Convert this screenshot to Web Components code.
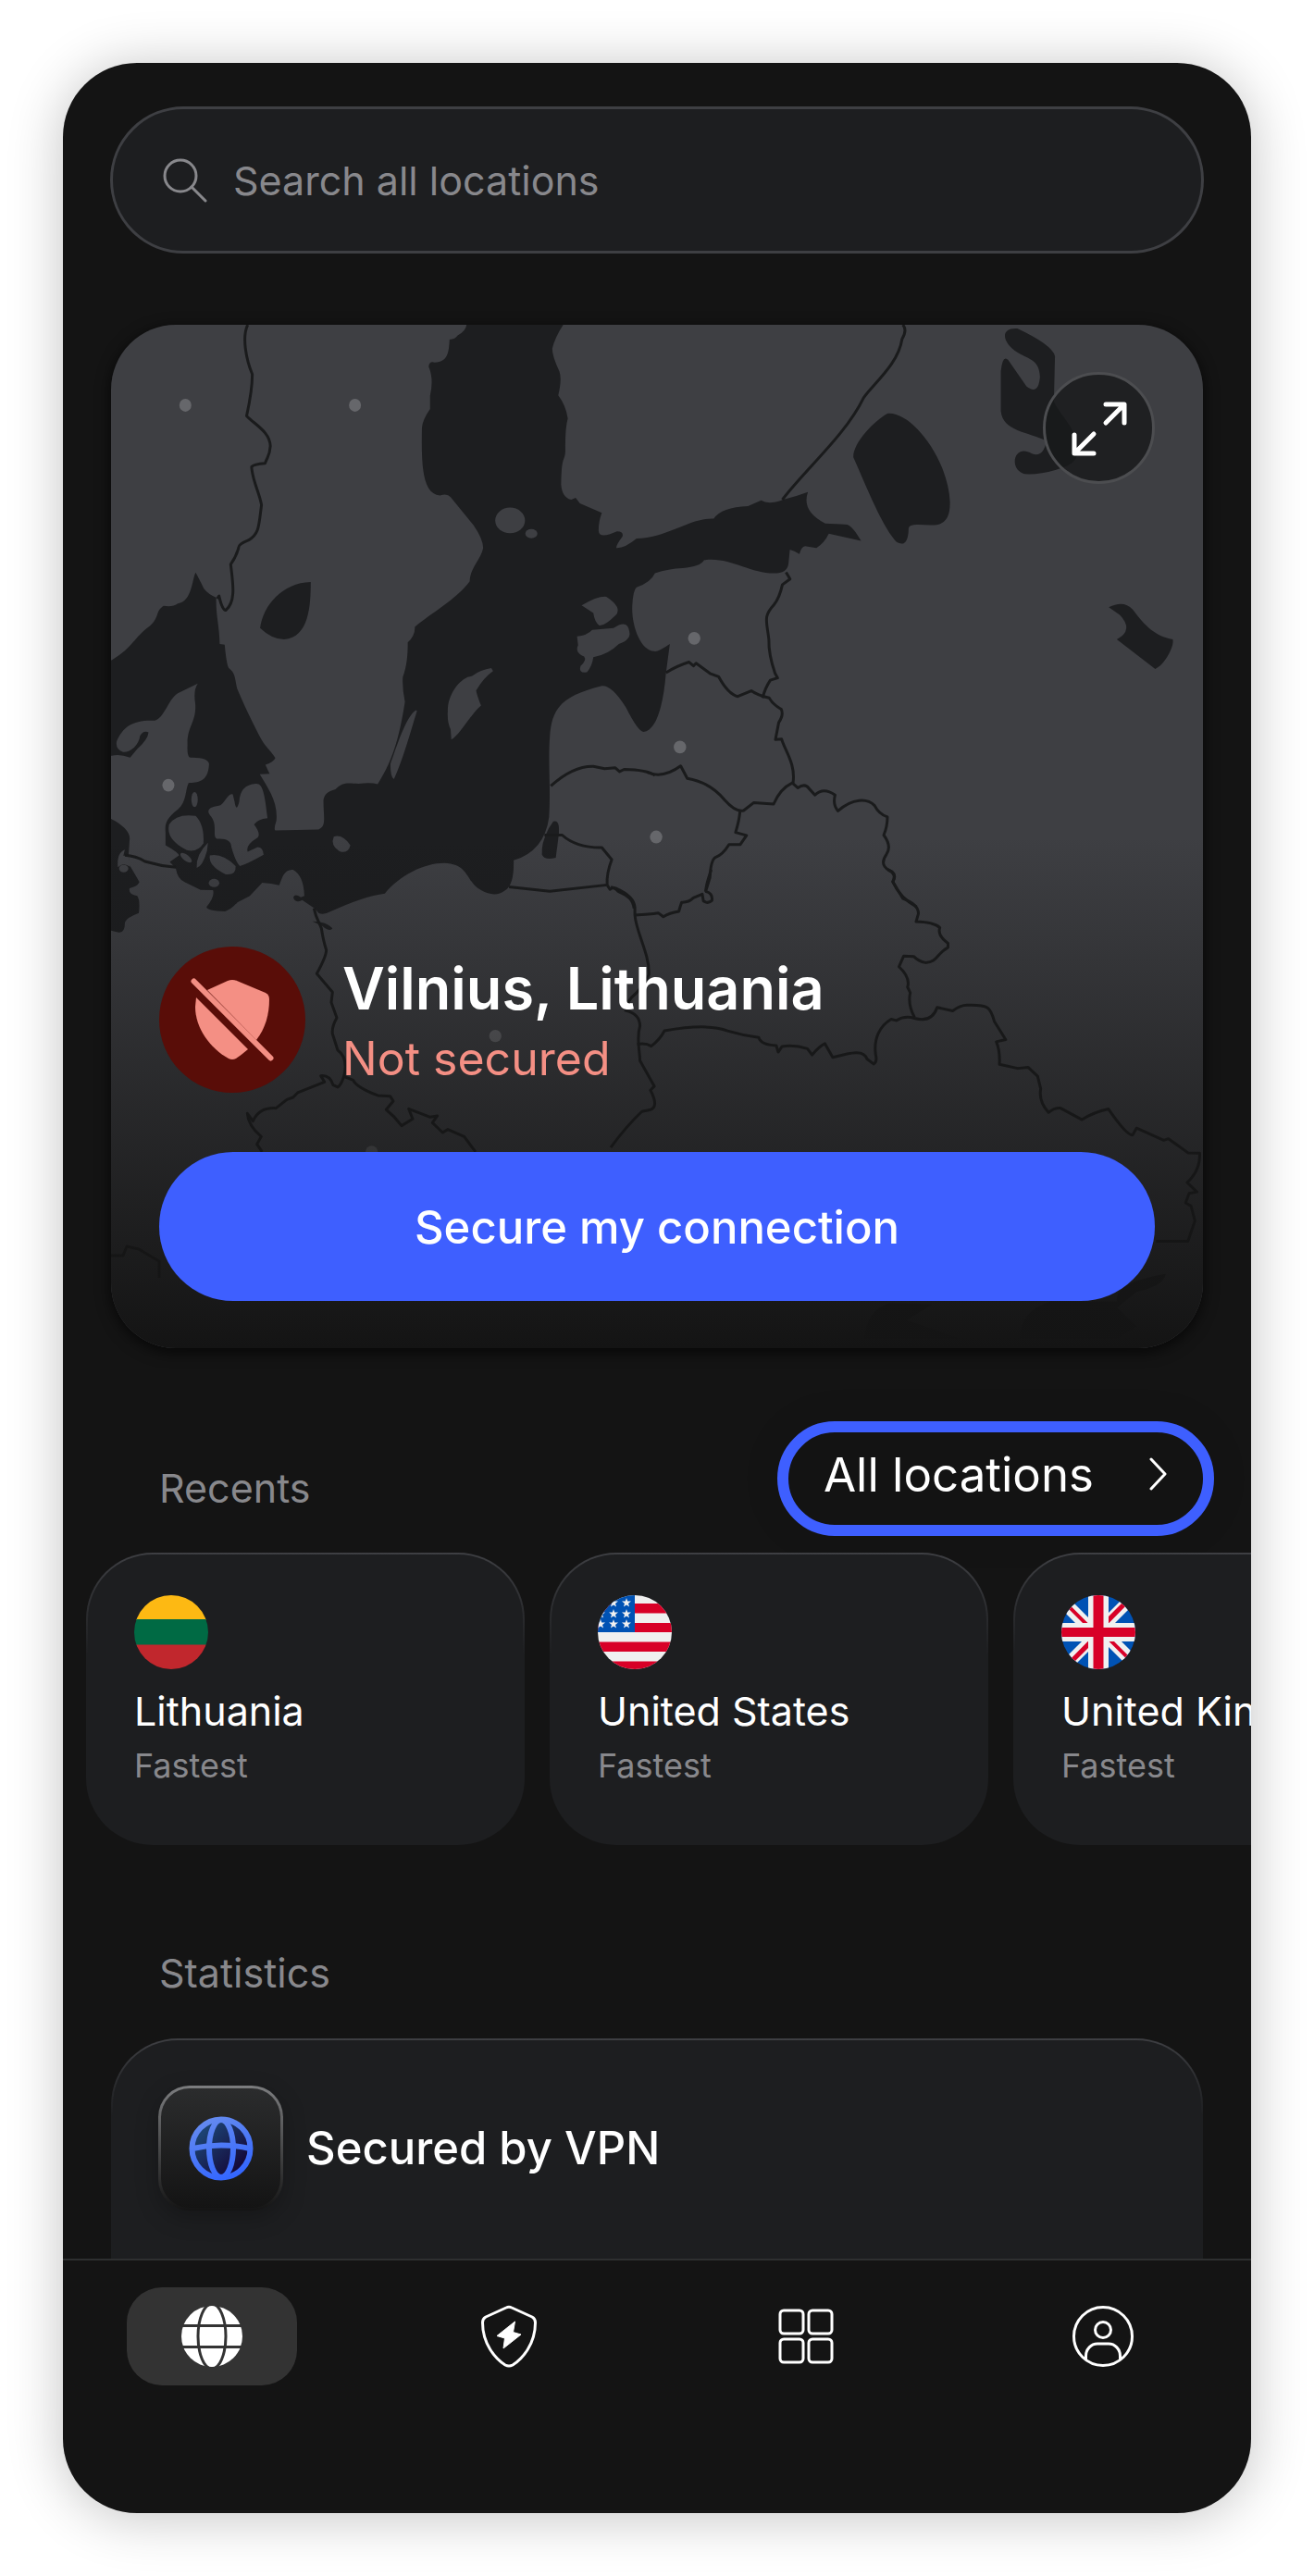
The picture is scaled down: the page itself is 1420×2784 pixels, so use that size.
<!DOCTYPE html>
<html lang="en">
<head>
<meta charset="utf-8">
<meta name="viewport" content="width=device-width, initial-scale=1">
<title>VPN</title>
<style>
    body {
        margin: 0;
        padding: 68px;
        background: #fff;
        font-family: Inter, "Liberation Sans", sans-serif;
        color: #fff;
    }
</style>
</head>
<body>
<app-shell>
    <search-bar></search-bar>
    <map-card place="Vilnius, Lithuania" status="Not secured">Secure my connection</map-card>
    <section-header>
        Recents
        <all-link slot="action">All locations</all-link>
    </section-header>
    <location-list>
        <location-card flag="lt" detail="Fastest">Lithuania</location-card>
        <location-card flag="us" detail="Fastest">United States</location-card>
        <location-card flag="gb" detail="Fastest">United Kingdom</location-card>
    </location-list>
    <section-header class="stats">Statistics</section-header>
    <stat-card>Secured by VPN</stat-card>
    <tab-bar slot="footer"></tab-bar>
</app-shell>

<script>
class AppShell extends HTMLElement {
    constructor() {
        super();
        this.attachShadow({ mode: 'open' });
        this.shadowRoot.innerHTML = `
            <style>
                :host {
                    display: block;
                    border-radius: 80px;
                    background: #141414;
                    box-shadow: 0 4px 60px rgba(0, 0, 0, 0.24);
                }
                .screen {
                    border-radius: inherit;
                    overflow: hidden;
                    padding-top: 47px;
                }
            </style>
            <div class="screen">
                <main><slot></slot></main>
                <slot name="footer"></slot>
            </div>
        `;
    }
}

class SearchBar extends HTMLElement {
    constructor() {
        super();
        this.attachShadow({ mode: 'open' });
        this.shadowRoot.innerHTML = `
            <style>
                :host { display: block; margin: 0 51px; }
                label {
                    display: flex;
                    align-items: center;
                    gap: 28px;
                    padding: 0 54px;
                    border: 3px solid #3e3f43;
                    border-radius: 80px;
                    background: #1d1e20;
                }
                svg { flex: none; width: 48px; height: 48px; }
                input {
                    flex: 1;
                    min-width: 0;
                    height: 153px;
                    padding: 0;
                    border: 0;
                    outline: 0;
                    background: none;
                    color: #fff;
                    font: 400 43px Inter, sans-serif;
                }
                input::placeholder { color: #88888c; opacity: 1; }
            </style>
            <label>
                <svg viewBox="0 0 48 48" fill="none" stroke="#88888c" stroke-width="3" stroke-linecap="round">
                    <circle cx="19" cy="19" r="17"/><path d="M31 31l15 15"/>
                </svg>
                <input type="search" placeholder="Search all locations" aria-label="Search all locations">
            </label>
        `;
    }
}

// The map is drawn in four overlapping tiles, each with its own grid.
const MAP = `
    <svg class="map" viewBox="0 0 1180 1106" preserveAspectRatio="xMidYMid slice" aria-hidden="true">
        <defs>
            <linearGradient id="fade" x1="0" y1="0" x2="0" y2="1">
                <stop offset=".5" stop-color="#141414" stop-opacity="0"/>
                <stop offset="1" stop-color="#141414"/>
            </linearGradient>
        </defs>
        <rect width="1180" height="1106" fill="#3e3f43"/>

        <g transform="translate(-10 -11) scale(.3827 .4082)">
            <path class="sea" d="M1030 27Q1028 44 1005 55Q998 65 982 66C980 95 980 125 940 127Q925 122 923 138Q938 170 927 215V250Q905 280 904 300C902 400 905 475 955 479Q975 472 985 483L1050 558Q1077 595 1077 618C1070 650 1040 670 1039 706C1000 755 930 790 884 827Q885 850 864 868C864 900 862 930 850 960Q848 990 856 1025C845 1090 830 1170 779 1243Q760 1238 725 1242C690 1240 680 1238 660 1257Q625 1265 626 1290C626 1330 635 1355 612 1363L490 1366Q485 1362 493 1340C498 1290 470 1255 446 1217L474 1216Q468 1205 462 1192Q485 1185 490 1174C475 1150 465 1150 445 1115C420 1070 395 1020 382 990C375 960 378 950 358 935Q352 925 347 874L333 872C332 820 322 800 323 749Q300 740 288 725Q275 700 265 683C255 700 255 760 215 765Q200 775 175 771C150 785 165 800 135 825C90 855 90 880 28 915H0V1168L28 1168Q50 1162 80 1173L100 1150Q130 1125 132 1106Q118 1100 108 1115C105 1140 80 1160 60 1158Q38 1152 42 1130C60 1090 90 1072 150 1075C180 1065 190 1010 220 1000L271 977Q258 995 264 1030C268 1080 240 1090 242 1140Q240 1175 252 1173Q300 1172 303 1190C300 1240 270 1238 245 1240C235 1260 240 1290 215 1310C180 1335 178 1350 180 1372V1405Q218 1425 218 1432L192 1449L209 1466Q214 1495 235 1503L279 1523L314 1524Q320 1540 296 1568Q295 1578 348 1580Q365 1575 383 1556L418 1539L453 1504Q480 1505 501 1511C510 1490 515 1468 540 1470Q570 1485 572 1539L562 1543Q545 1532 541 1543Q545 1560 566 1550L601 1572L613 1585Q627 1590 645 1581Q740 1540 799 1533C840 1485 910 1452 967 1452C1040 1455 1025 1500 1071 1524Q1110 1545 1138 1525Q1165 1510 1163 1445Q1250 1420 1263 1330C1268 1260 1260 1180 1265 1120C1270 1040 1300 1010 1412 983Q1440 980 1480 1040Q1515 1105 1530 1105C1565 1100 1585 1040 1593 950L1604 872Q1568 895 1560 891C1520 890 1495 820 1498 770Q1500 730 1510 722Q1550 710 1562 685Q1600 672 1640 671Q1690 668 1701 650C1770 640 1830 685 1898 685Q1935 685 1939 660L1943 622Q1955 625 1970 634Q1975 615 1986 613L2018 618Q2040 605 2053 580L2144 599Q2120 560 2105 556C2080 553 2060 555 2043 553Q1975 520 1994 470Q1960 482 1924 490Q1883 505 1862 492L1825 507Q1750 510 1728 540C1660 538 1600 590 1510 593Q1475 620 1453 618Q1452 610 1470 588Q1475 575 1455 574Q1405 595 1403 573Q1402 550 1412 525L1350 500L1338 485L1326 490Q1300 485 1297 450C1298 370 1308 390 1309 360Q1308 300 1316 275Q1310 240 1289 214Q1300 170 1292 150Q1272 110 1272 90Q1280 60 1303 27V0H1030Z"/>
            <g class="land">
                <path d="M1100 936Q1070 940 1045 957C1010 960 975 1010 977 1050Q975 1080 985 1098L987 1125C1010 1115 1040 1060 1071 1035Q1060 1010 1057 995Q1080 960 1105 944Z"/>
                <path d="M888 1047C860 1060 830 1150 815 1190Q815 1225 825 1230C850 1180 870 1110 890 1050Z"/>
                <path d="M655 1382Q680 1375 702 1405Q695 1430 670 1420Q645 1405 655 1382Z"/>
                <ellipse cx="1153" cy="545" rx="42" ry="34"/>
                <ellipse cx="1213" cy="580" rx="17" ry="12"/>
                <path d="M1355 770Q1400 745 1425 747Q1470 775 1452 795Q1420 825 1405 823Q1392 815 1388 790Z"/>
                <path d="M1342 852Q1370 850 1385 835L1445 830Q1485 805 1490 840Q1495 860 1460 872Q1430 900 1388 907Q1385 930 1370 947Q1345 950 1352 930Q1370 915 1362 905Q1335 895 1345 875Z"/>
                <path d="M370 1270C355 1265 345 1300 330 1300Q290 1305 305 1325C330 1350 310 1380 325 1388Q365 1385 366 1410Q378 1450 390 1460Q410 1455 457 1430Q455 1410 440 1410L412 1422Q405 1405 440 1385Q450 1375 430 1350Q440 1335 468 1333C460 1270 455 1240 435 1242Q390 1245 388 1290Q380 1320 375 1290Z"/>
                <path d="M190 1350Q210 1320 265 1327Q290 1350 287 1400Q270 1425 240 1418Q180 1390 190 1350Z"/>
                <path d="M300 1398Q265 1430 268 1465Q285 1460 297 1420Z"/>
                <path d="M305 1432Q340 1425 378 1460Q380 1485 350 1482Q300 1460 305 1432Z"/>
                <ellipse cx="238" cy="1438" rx="19" ry="8" transform="rotate(35 238 1438)"/>
                <ellipse cx="262" cy="1284" rx="9" ry="20"/>
                <ellipse cx="317" cy="1505" rx="15" ry="11"/>
            </g>
            <path class="sea" d="M590 708C510 710 455 770 447 830Q480 860 515 860C585 855 590 770 590 708Z"/>
            <path class="sea" d="M1275 1342Q1295 1335 1290 1380L1282 1438Q1250 1445 1243 1430Q1240 1400 1262 1360Z"/>
            <path class="border" d="M412 27C395 60 408 120 425 158Q425 200 409 268C430 290 475 310 476 348C474 375 468 375 461 394Q430 396 423 403C425 440 445 470 451 504C443 560 445 580 415 597Q385 608 386 618Q380 640 364 661C370 710 380 760 350 783Q340 782 331 745L326 752"/>
            <path class="border" d="M1268 1248Q1330 1195 1388 1196L1420 1202L1450 1200L1462 1210L1475 1204Q1540 1205 1562 1220M1250 1378H1300Q1340 1412 1412 1411L1440 1443Q1425 1480 1427 1510L1265 1527L1150 1515M1427 1510L1435 1522Q1445 1512 1458 1527C1490 1540 1500 1550 1503 1572"/>
            <g class="dot"><circle cx="236" cy="240" r="17"/><circle cx="715" cy="240" r="17"/><circle cx="188" cy="1246" r="17"/></g>
        </g>

        <g transform="translate(580 -11) scale(.3954 .4082)">
            <g class="sea">
                <path d="M655 262C620 280 560 340 562 378C600 460 640 560 680 602Q712 620 713 565Q715 555 740 556C780 557 828 570 826 495C820 380 720 255 655 262Z"/>
                <path d="M1010 37C960 35 970 75 1010 100C1045 120 1070 120 1072 165Q1068 215 1035 190L985 120Q970 105 965 150V255C970 310 1040 310 1090 335Q1080 380 1050 368C1000 340 985 410 1030 422Q1080 425 1140 403Q1180 390 1175 350C1170 300 1130 270 1110 230L1113 110Q1105 80 1010 37Z"/>
                <path d="M1260 775Q1300 755 1325 780C1360 825 1385 850 1435 860C1440 880 1410 930 1387 938L1282 860Q1330 835 1290 795Z"/>
            </g>
            <g class="border">
                <path d="M697 27Q710 40 695 65C685 130 620 180 590 220C540 320 430 410 368 490"/>
                <path d="M378 682L389 700L368 715Q360 750 345 768C315 800 325 810 331 860Q330 900 348 950L355 962L335 968Q320 990 314 1015"/>
                <path d="M50 948Q80 930 113 920L125 930L132 923L170 950L194 959Q220 1005 246 1011L283 996Q300 1008 332 1015Q340 1030 365 1045Q372 1060 358 1080L349 1125L366 1124C375 1155 405 1190 397 1240"/>
                <path d="M0 1212Q40 1230 90 1195L108 1228C150 1235 185 1255 210 1285Q240 1318 262 1313L290 1292L344 1296Q362 1255 395 1240L410 1253Q430 1240 440 1254L457 1272Q480 1250 512 1272Q505 1298 520 1314C560 1280 600 1280 620 1300Q632 1323 655 1330Q655 1355 645 1378Q668 1408 652 1430Q630 1460 668 1475Q680 1485 670 1502Q690 1545 735 1568"/>
                <path d="M158 1528L170 1490Q172 1445 185 1437Q205 1430 222 1403L253 1403L270 1379L240 1371Q250 1340 252 1316"/>
            </g>
            <g class="dot"><circle cx="127" cy="857" r="17"/><circle cx="88" cy="1145" r="17"/><circle cx="23" cy="1383" r="17"/></g>
        </g>

        <g transform="translate(-10 529) scale(.3333)">
            <path class="sea" d="M0 8L30 15C70 35 95 60 90 85L87 130L90 165Q105 190 122 220Q115 235 90 240Q85 260 115 265Q125 280 120 320Q80 335 75 350Q75 385 55 383L0 370Z"/>
            <path class="land" d="M52 172Q48 125 75 115Q72 125 70 135L88 132L92 170Q75 158 62 165Z"/>
            <ellipse class="land" cx="71" cy="176" rx="15" ry="12"/>
            <path class="sea" d="M683 347Q730 348 748 370Q740 383 715 362Z"/>
            <g class="border">
                <path d="M75 133Q110 135 140 153Q190 168 240 172"/>
                <path d="M688 305C695 340 705 350 712 370Q718 410 728 440Q728 460 697 517L748 577L744 610L762 660Q745 690 748 712L765 765Q800 790 785 850Q775 880 765 885L750 878Q740 845 710 848L722 868Q680 885 635 903L620 918L600 925L565 953Q510 950 490 995L472 970Q475 1010 517 1045L503 1070L520 1095"/>
                <path d="M785 850L815 862Q825 885 895 912L935 914L945 930L922 958Q950 980 972 1010L1008 988L995 955L1065 982L1088 978L1072 1000L1105 1032L1122 1022L1175 1045L1212 1095"/>
            </g>
            <g class="dot"><circle cx="1276" cy="719" r="20"/><circle cx="875" cy="1095" r="20"/></g>
        </g>

        <g transform="translate(540 589) scale(.4209 .338)">
            <g class="border">
                <path d="M0 55L15 60Q60 85 62 120V145C65 200 100 270 98 335Q90 360 65 395Q40 420 38 450Q75 460 75 500C65 540 75 580 75 610L112 692L102 705Q125 760 100 768L80 773Q40 820 0 888"/>
                <path d="M62 145Q100 142 122 138L135 150Q150 138 175 133Q178 118 182 104Q200 105 212 90L235 78L238 100Q250 110 260 98Q262 75 245 70Q240 65 258 0"/>
                <path d="M712 0Q735 12 724 38L750 92Q790 110 790 140L784 166Q830 168 845 185Q838 210 866 235L866 248C835 270 840 295 808 297Q790 293 778 277L752 276L740 310Q770 345 762 375L769 393Q762 430 780 472"/>
                <path d="M68 558Q90 553 104 564Q125 545 138 515Q250 490 300 515Q340 530 380 536Q385 560 425 562L430 583L440 565Q470 558 505 572L517 592Q535 565 550 556L570 600C620 583 650 575 658 605L675 621Q685 615 680 590C675 540 690 500 720 478L733 482Q755 465 780 475Q825 490 838 440L878 451Q900 430 920 433C970 432 975 440 985 485L1014 543L990 550Q1000 580 998 622L1045 635L1072 632L1096 660L1104 700Q1098 740 1124 776Q1140 760 1155 762L1210 799Q1240 775 1278 765Q1325 850 1340 848L1350 826L1420 865L1432 860L1482 905L1512 906Q1515 960 1480 1000L1505 1030L1485 1035L1476 1065L1490 1075Q1495 1100 1500 1122L1482 1188L1400 1188"/>
            </g>
            <path class="sea" d="M1050 1500Q1050 1410 1130 1380H1300Q1290 1320 1425 1292Q1420 1330 1350 1350L1300 1400L1350 1460L1300 1500Z"/>
            <path class="sea" d="M650 1500Q660 1400 720 1385L825 1390L760 1440L900 1500Z"/>
        </g>

        <path class="border" d="M0 1006L13 1006L17 996L30 999L45 1008L52 1012V1030"/>
        <rect width="1180" height="1106" fill="url(#fade)"/>
    </svg>
`;

class MapCard extends HTMLElement {
    constructor() {
        super();
        this.attachShadow({ mode: 'open' });
        this.shadowRoot.innerHTML = `
            <style>
                :host {
                    display: flex;
                    flex-direction: column;
                    justify-content: space-between;
                    position: relative;
                    box-sizing: border-box;
                    aspect-ratio: 1180 / 1106;
                    margin: 77px 52px 0;
                    padding: 51px 52px;
                    border-radius: 70px;
                    overflow: hidden;
                    box-shadow: 0 4px 16px rgba(0, 0, 0, 0.7);
                }
                .map { position: absolute; inset: 0; width: 100%; height: 100%; }
                .sea { fill: #1d1e20; }
                .land { fill: #3e3f43; }
                .border, .border path { fill: none; stroke: #1a1b1c; stroke-width: 3; stroke-linejoin: round; vector-effect: non-scaling-stroke; }
                .dot { fill: #66676b; }
                button { border: 0; padding: 0; color: #fff; cursor: pointer; font-family: inherit; }
                .expand {
                    position: relative;
                    align-self: flex-end;
                    display: grid;
                    place-items: center;
                    width: 121px;
                    height: 121px;
                    border: 3px solid #4c4d50;
                    border-radius: 50%;
                    background: rgba(24, 25, 26, 0.8);
                }
                .expand svg { width: 60px; height: 60px; }
                .panel { position: relative; }
                .status { display: flex; align-items: center; gap: 40px; margin-bottom: 64px; }
                .badge { flex: none; width: 158px; height: 158px; }
                .place { padding-top: 4px; }
                h1, p { margin: 0; }
                h1 { font-size: 63px; font-weight: 600; line-height: 80px; }
                p { font-size: 50px; line-height: 72px; color: #f48f84; }
                .connect {
                    width: 100%;
                    height: 161px;
                    padding-top: 2px;
                    border-radius: 80px;
                    background: #3e5fff;
                    font-size: 49px;
                    font-weight: 500;
                }
            </style>
            ${MAP}
            <button class="expand" aria-label="Expand map">
                <svg viewBox="0 0 60 60" fill="none" stroke="#fff" stroke-width="5" stroke-linecap="round" stroke-linejoin="round">
                    <path d="M37 4h20v20M56 5L37 24M3 37v20h21M4 56l20-20"/>
                </svg>
            </button>
            <div class="panel">
                <div class="status">
                    <svg class="badge" viewBox="-79 -79 158 158" fill="#f48f84" aria-hidden="true">
                        <circle r="79" fill="#590d08"/>
                        <path d="M-27-32L-5-42Q0-44 5-42L36-29Q40-27 40-22C40-6 36 9 26 22Z"/>
                        <path d="M-39-24L17 32Q10 38 4 42Q0 44-4 42C-24 31-40 9-40-14Z"/>
                        <path d="M-41.5-41.5L41.5 41.5" stroke="#f48f84" stroke-width="6" stroke-linecap="round"/>
                    </svg>
                    <div class="place">
                        <h1></h1>
                        <p></p>
                    </div>
                </div>
                <button class="connect"><slot></slot></button>
            </div>
        `;
    }

    connectedCallback() {
        this.shadowRoot.querySelector('h1').textContent = this.getAttribute('place');
        this.shadowRoot.querySelector('p').textContent = this.getAttribute('status');
    }
}

class SectionHeader extends HTMLElement {
    constructor() {
        super();
        this.attachShadow({ mode: 'open' });
        this.shadowRoot.innerHTML = `
            <style>
                :host {
                    display: flex;
                    justify-content: space-between;
                    align-items: flex-end;
                    padding: 79px 40px 18px 104px;
                }
                :host(.stats) { padding-top: 112px; padding-bottom: 19px; }
                h2 {
                    margin: 0 0 26px;
                    font-size: 43px;
                    font-weight: 400;
                    line-height: 52px;
                    color: #88888c;
                }
            </style>
            <h2><slot></slot></h2>
            <slot name="action"></slot>
        `;
    }
}

class AllLink extends HTMLElement {
    constructor() {
        super();
        this.attachShadow({ mode: 'open' });
        this.shadowRoot.innerHTML = `
            <style>
                :host { display: block; }
                a {
                    display: flex;
                    align-items: center;
                    gap: 60px;
                    box-sizing: border-box;
                    height: 124px;
                    padding: 0 38px 10px;
                    border: 12px solid #3e5fff;
                    border-radius: 62px;
                    background: #131313;
                    box-shadow: 0 0 40px rgba(0, 0, 0, 0.1);
                    color: #fff;
                    font-size: 51px;
                    text-decoration: none;
                    white-space: nowrap;
                }
                svg { width: 20px; height: 38px; }
            </style>
            <a href="#locations">
                <slot></slot>
                <svg viewBox="0 0 20 38" fill="none" stroke="#fff" stroke-width="3" stroke-linecap="round" stroke-linejoin="round" aria-hidden="true"><path d="M2 3l15 16L2 35"/></svg>
            </a>
        `;
    }
}

class LocationList extends HTMLElement {
    constructor() {
        super();
        this.attachShadow({ mode: 'open' });
        this.shadowRoot.innerHTML = `
            <style>
                :host { display: flex; gap: 27px; padding-left: 25px; }
            </style>
            <slot></slot>
        `;
    }
}

const STAR = 'l1.2 3.6h3.8l-3 2.3 1.1 3.7-3.1-2.2-3.1 2.2 1.1-3.7-3-2.3h3.8z';
const stars = [3, 17, 31].map(x => [3, 15, 26].map(y => `M${x} ${y}${STAR}`).join('')).join('');

const FLAGS = {
    lt: `
        <path fill="#fdb913" d="M0 0h80v27H0z"/>
        <path fill="#006a44" d="M0 26h80v28H0z"/>
        <path fill="#c1272d" d="M0 53.5h80V80H0z"/>
    `,
    us: `
        <path fill="#f0f0f0" d="M0 0h80v80H0z"/>
        <path fill="#d80027" d="M0 9h80v10.5H0zM0 30h80v10H0zM0 50.5h80v10.5H0zM0 71.5h80V80H0z"/>
        <path fill="#0052b4" d="M0 0h40v40H0z"/>
        <path fill="#f0f0f0" d="${stars}"/>
    `,
    gb: `
        <path fill="#0052b4" d="M0 0h80v80H0z"/>
        <path fill="#f0f0f0" d="M-5 10L20 35H40V35L5 0ZM85 70L60 45H40V45L75 80ZM80-10L35 35H53L90-2ZM0 90L45 45H27L-10 82Z"/>
        <path fill="#d80027" d="M0 1.5L28.5 30H23L0 7ZM80 78.5L51.5 50H57L80 73ZM74 0L49 25V31.5H50L81 0ZM6 80L31 55V48.5H30L-1 80Z"/>
        <path fill="#f0f0f0" d="M29 0h22v80H29zM0 30h80v20H0z"/>
        <path fill="#d80027" d="M34.5 0h11v80h-11zM0 35h80v10H0z"/>
    `
};

class LocationCard extends HTMLElement {
    constructor() {
        super();
        this.attachShadow({ mode: 'open' });
        this.shadowRoot.innerHTML = `
            <style>
                :host { display: block; flex: 0 0 474px; }
                button {
                    display: block;
                    box-sizing: border-box;
                    width: 100%;
                    padding: 44px 50px 60px;
                    border: 2px solid transparent;
                    border-radius: 72px;
                    background:
                        linear-gradient(#1d1e20, #1d1e20) padding-box,
                        linear-gradient(#3e3f43, #1d1e20 35%) border-box;
                    color: #fff;
                    font-family: inherit;
                    text-align: left;
                    white-space: nowrap;
                    cursor: pointer;
                }
                svg { display: block; width: 80px; height: 80px; border-radius: 50%; }
                span { display: block; }
                .name { margin-top: 17px; font-size: 43px; line-height: 56px; }
                .detail { margin-top: 7px; font-size: 36px; line-height: 48px; color: #88888c; }
            </style>
            <button>
                <svg viewBox="0 0 80 80" aria-hidden="true"></svg>
                <span class="name"><slot></slot></span>
                <span class="detail"></span>
            </button>
        `;
    }

    connectedCallback() {
        this.shadowRoot.querySelector('svg').innerHTML = FLAGS[this.getAttribute('flag')];
        this.shadowRoot.querySelector('.detail').textContent = this.getAttribute('detail');
    }
}

class StatCard extends HTMLElement {
    constructor() {
        super();
        this.attachShadow({ mode: 'open' });
        this.shadowRoot.innerHTML = `
            <style>
                :host {
                    display: flex;
                    align-items: center;
                    gap: 25px;
                    margin: 0 52px;
                    padding: 49px 49px 52px;
                    border: 2px solid transparent;
                    border-bottom: 0;
                    border-radius: 72px 72px 0 0;
                    background:
                        linear-gradient(#1d1e20, #1d1e20) padding-box,
                        linear-gradient(#3e3f43, #1d1e20 35%) border-box;
                    font-size: 49px;
                    font-weight: 500;
                }
                .tile {
                    display: grid;
                    place-items: center;
                    box-sizing: border-box;
                    width: 135px;
                    height: 135px;
                    border: 3px solid transparent;
                    border-radius: 34px;
                    background:
                        linear-gradient(#2b2c2d, #141414) padding-box,
                        linear-gradient(#7c7d7f, #141414) border-box;
                    box-shadow: 0 8px 24px rgba(0, 0, 0, 0.25);
                }
                svg { width: 70px; height: 70px; }
            </style>
            <div class="tile">
                <svg viewBox="-35 -35 70 70" aria-hidden="true">
                    <defs>
                        <linearGradient id="line" x1="-15" y1="-32" x2="10" y2="32" gradientUnits="userSpaceOnUse">
                            <stop stop-color="#648aef"/><stop offset="1" stop-color="#3366ff"/>
                        </linearGradient>
                        <linearGradient id="ball" x1="0" y1="0" x2="1" y2="1">
                            <stop offset=".2" stop-color="#1c4272"/><stop offset=".8" stop-color="#150b3c"/>
                        </linearGradient>
                    </defs>
                    <circle r="31" fill="url(#ball)"/>
                    <g fill="none" stroke="url(#line)" stroke-width="6">
                        <circle r="31.5"/>
                        <ellipse rx="13" ry="31"/>
                        <path d="M-31 0Q0-7 31 0"/>
                    </g>
                </svg>
            </div>
            <span><slot></slot></span>
        `;
    }
}

class TabBar extends HTMLElement {
    constructor() {
        super();
        this.attachShadow({ mode: 'open' });
        this.shadowRoot.innerHTML = `
            <style>
                :host { display: block; border-top: 2px solid #2e2f30; }
                nav {
                    display: grid;
                    grid-template-columns: repeat(4, 1fr);
                    justify-items: center;
                    padding: 29px 0 138px;
                }
                button {
                    display: grid;
                    place-items: center;
                    width: 184px;
                    height: 106px;
                    padding: 0;
                    border: 0;
                    border-radius: 38px;
                    background: none;
                    cursor: pointer;
                }
                button[aria-current] { background: #333; }
                svg { width: 70px; height: 70px; fill: none; stroke: #fff; stroke-width: 3; stroke-linejoin: round; }
            </style>
            <nav>
                <button aria-label="VPN" aria-current="page">
                    <svg viewBox="-35 -35 70 70">
                        <circle r="33" fill="#fff" stroke="none"/>
                        <g stroke="#333"><path d="M-34-11.5H34M-34 11.5H34"/><ellipse rx="15" ry="35"/></g>
                    </svg>
                </button>
                <button aria-label="Threat protection">
                    <svg viewBox="-35 -35 70 70">
                        <path d="M-3-31Q0-32.5 3-31L25-21Q28.5-19 28.5-15C28.5 8 15 24 4 31Q0 33-4 31C-15 24-28.5 8-28.5-15Q-28.5-19-25-21Z"/>
                        <path fill="#fff" stroke-width="1" d="M6.5-16L-13-0.5L-4.5 2L-6 13L13-2L4.5-4.5Z"/>
                    </svg>
                </button>
                <button aria-label="Apps">
                    <svg viewBox="-35 -35 70 70">
                        <rect x="-28" y="-28" width="25" height="25" rx="4"/>
                        <rect x="3" y="-28" width="25" height="25" rx="4"/>
                        <rect x="-28" y="3" width="25" height="25" rx="4"/>
                        <rect x="3" y="3" width="25" height="25" rx="4"/>
                    </svg>
                </button>
                <button aria-label="Profile">
                    <svg viewBox="-35 -35 70 70">
                        <circle r="31.5"/>
                        <circle cy="-7" r="8.5"/>
                        <path d="M-18.5 25V21C-18.5 14-13 8-6 8H6C13 8 18.5 14 18.5 21V25"/>
                    </svg>
                </button>
            </nav>
        `;
    }
}

customElements.define('app-shell', AppShell);
customElements.define('search-bar', SearchBar);
customElements.define('map-card', MapCard);
customElements.define('section-header', SectionHeader);
customElements.define('all-link', AllLink);
customElements.define('location-list', LocationList);
customElements.define('location-card', LocationCard);
customElements.define('stat-card', StatCard);
customElements.define('tab-bar', TabBar);
</script>
</body>
</html>
